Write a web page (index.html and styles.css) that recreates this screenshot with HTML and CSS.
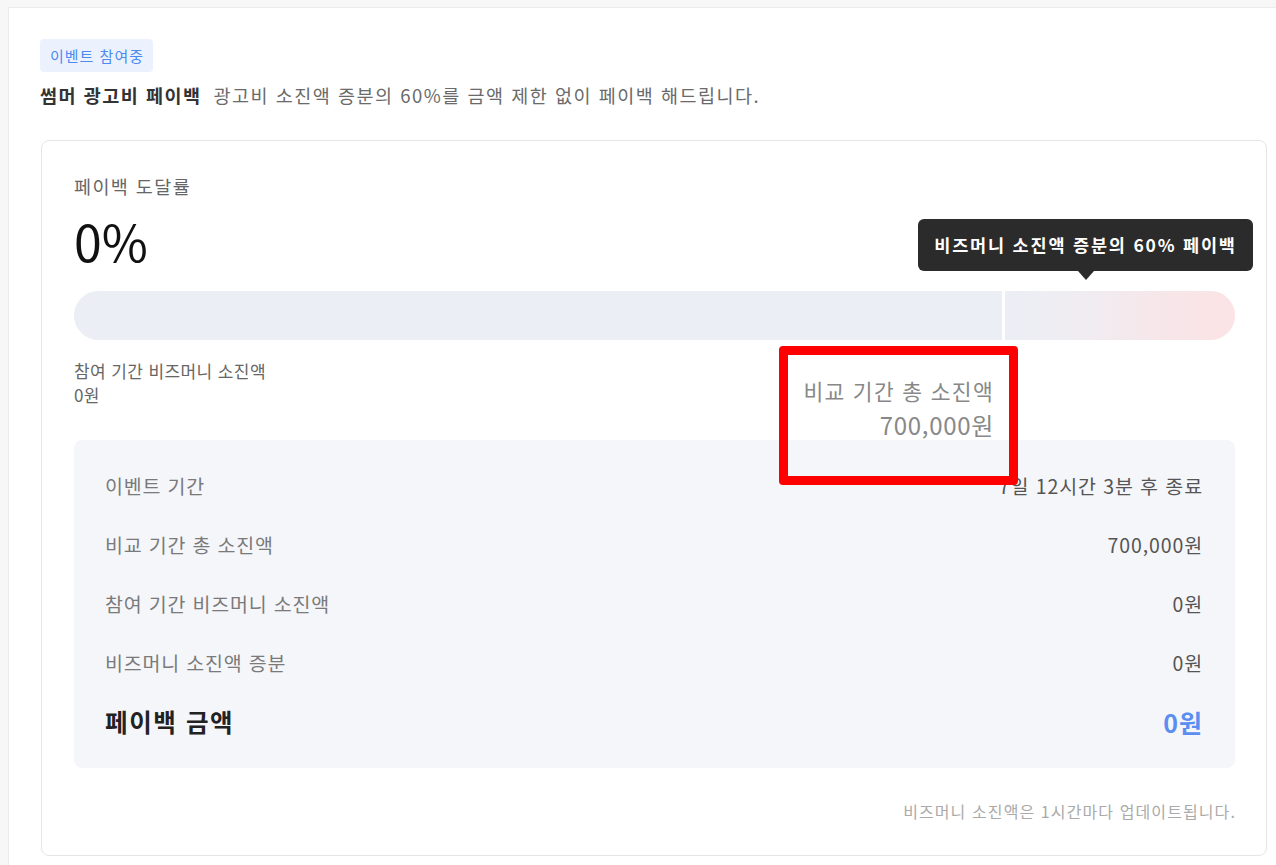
FILE: index.html
```html
<!DOCTYPE html>
<html lang="ko">
<head>
<meta charset="utf-8">
<title>썸머 광고비 페이백</title>
<link rel="stylesheet" href="styles.css">
</head>
<body>
<div class="panel">
  <span class="badge">이벤트 참여중</span>
  <p class="headline"><strong class="headline-title">썸머 광고비 페이백</strong><span class="headline-desc">광고비 소진액 증분의 60%를 금액 제한 없이 페이백 해드립니다.</span></p>

  <section class="card">
    <div class="rate-label">페이백 도달률</div>
    <div class="rate-value">0%</div>

    <div class="bar">
      <div class="bar-seg bar-left"></div>
      <div class="bar-seg bar-right"></div>
    </div>

    <div class="tooltip">비즈머니 소진액 증분의 60% 페이백</div>

    <div class="stats">
      <div class="stat-left">
        <div class="stat-left-label">참여 기간 비즈머니 소진액</div>
        <div class="stat-left-value">0원</div>
      </div>
      <div class="stat-right">
        <div class="stat-right-label">비교 기간 총 소진액</div>
        <div class="stat-right-value">700,000원</div>
      </div>
    </div>

    <div class="highlight"></div>

    <div class="summary">
      <div class="row"><span class="row-label">이벤트 기간</span><span class="row-value">7일 12시간 3분 후 종료</span></div>
      <div class="row"><span class="row-label">비교 기간 총 소진액</span><span class="row-value">700,000원</span></div>
      <div class="row"><span class="row-label">참여 기간 비즈머니 소진액</span><span class="row-value">0원</span></div>
      <div class="row"><span class="row-label">비즈머니 소진액 증분</span><span class="row-value">0원</span></div>
      <div class="row row-total"><span class="row-label">페이백 금액</span><span class="row-value">0원</span></div>
    </div>

    <p class="note">비즈머니 소진액은 1시간마다 업데이트됩니다.</p>
  </section>
</div>
</body>
</html>
```

FILE: styles.css
```css
* { box-sizing: border-box; }

html, body {
  margin: 0;
  padding: 0;
  height: 100%;
  overflow: hidden;
}

body {
  background: #f7f7f7;
  font-family: "Noto Sans CJK KR", "Noto Sans", sans-serif;
  color: #333;
}

.panel {
  margin: 7px -40px 0 8px;
  background: #ffffff;
  border: 1px solid #ececec;
  padding: 31px 0 40px 32px;
  min-height: 900px;
}

.badge {
  display: inline-block;
  height: 33px;
  line-height: 33px;
  padding: 0 9px 0 10px;
  margin-left: -1px;
  border-radius: 4px;
  background: #ebf2fe;
  color: #4d8af0;
  font-size: 15px;
  letter-spacing: 1px;
}

.headline {
  margin: 11px 0 0 -1px;
  line-height: 24px;
  font-size: 18.5px;
  letter-spacing: 1.5px;
}

.headline-title {
  font-weight: 700;
  color: #333;
  margin-right: 12px;
}

.headline-desc {
  color: #6a6a6a;
}

.card {
  position: relative;
  width: 1226px;
  margin-top: 33px;
  border: 1px solid #e6e6e6;
  border-radius: 8px;
  padding: 32px 31px 34px 32px;
}

.rate-label {
  font-size: 18.5px;
  line-height: 26px;
  letter-spacing: 1.4px;
  color: #666;
}

.rate-value {
  margin-top: 11px;
  font-size: 50px;
  line-height: 60px;
  color: #111;
}

.bar {
  display: flex;
  gap: 3px;
  height: 49px;
  margin-top: 21px;
}

.bar-seg {
  height: 100%;
}

.bar-left {
  width: 928px;
  background: #eceef5;
  border-radius: 25px 0 0 25px;
}

.bar-right {
  flex: 1;
  background: linear-gradient(90deg, #eceef5 0%, #efedf2 30%, #f7e6e9 70%, #fbe3e4 100%);
  border-radius: 0 25px 25px 0;
}

.tooltip {
  position: absolute;
  left: 876px;
  top: 78px;
  width: 335px;
  height: 52px;
  line-height: 52px;
  text-align: center;
  background: #2b2b2b;
  color: #fff;
  font-size: 17.5px;
  font-weight: 700;
  letter-spacing: 1.8px;
  border-radius: 6px;
}

.tooltip::after {
  content: "";
  position: absolute;
  left: 50%;
  top: 100%;
  margin-left: -8px;
  border-left: 8px solid transparent;
  border-right: 8px solid transparent;
  border-top: 9px solid #2b2b2b;
}

.stats {
  display: flex;
  justify-content: space-between;
  align-items: flex-start;
  height: 81px;
  margin-top: 19px;
}

.stat-left {
  font-size: 17px;
  line-height: 24px;
  letter-spacing: 0.4px;
  color: #666;
}

.stat-right {
  margin-right: 241px;
  padding-top: 18px;
  text-align: right;
  color: #888;
}

.stat-right-label {
  font-size: 21.5px;
  line-height: 28px;
  letter-spacing: 1.3px;
}

.stat-right-value {
  font-size: 24px;
  line-height: 40px;
  letter-spacing: 0.7px;
}

.highlight {
  position: absolute;
  left: 737px;
  top: 205px;
  width: 239px;
  height: 139px;
  border: 9px solid #ff0000;
  border-radius: 4px;
}

.summary {
  background: #f5f6fa;
  border-radius: 8px;
  padding: 16px 33px 17px 31px;
}

.row {
  display: flex;
  justify-content: space-between;
  align-items: center;
  height: 59px;
  font-size: 19.5px;
}

.row-label {
  color: #7a7a7a;
  letter-spacing: 0.8px;
}

.row-value {
  color: #555;
  letter-spacing: 0.9px;
  margin-right: -1px;
}

.row-total .row-label {
  font-size: 24.5px;
  font-weight: 700;
  letter-spacing: 1.6px;
  color: #222;
}

.row-total .row-value {
  font-size: 25px;
  font-weight: 700;
  letter-spacing: 1px;
  color: #5b8ef0;
}

.note {
  margin: 33px -1px 0 0;
  text-align: right;
  font-size: 16px;
  line-height: 20px;
  letter-spacing: 1.1px;
  color: #aaa;
}
```
